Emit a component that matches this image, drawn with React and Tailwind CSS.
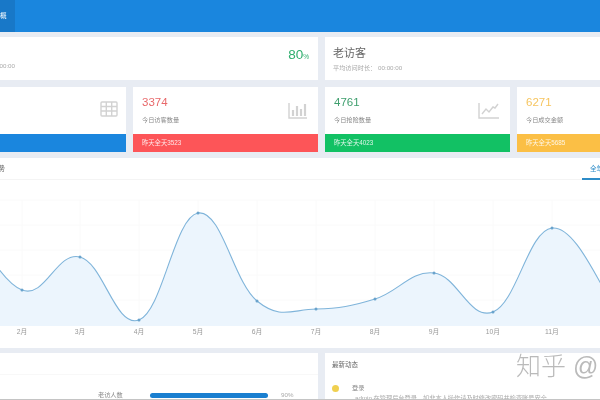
const font = { fontFamily: '"Liberation Sans", "Noto Sans CJK SC", sans-serif' };

const points = [
  [-37, 212], [22, 290], [80, 257], [139, 320], [198, 213], [257, 301],
  [316, 309], [375, 299], [434, 273], [493, 312], [552, 228], [611, 300],
];
const months = ['2月', '3月', '4月', '5月', '6月', '7月', '8月', '9月', '10月', '11月'];

// catmull-rom through the data points, chart top is y=181 on the page
function smoothPath(pts) {
  let d = `M${pts[0][0]} ${pts[0][1]}`;
  for (let i = 0; i < pts.length - 1; i++) {
    const p0 = pts[i - 1] || pts[i];
    const p1 = pts[i];
    const p2 = pts[i + 1];
    const p3 = pts[i + 2] || p2;
    const c1x = p1[0] + (p2[0] - p0[0]) / 5;
    const c1y = p1[1] + (p2[1] - p0[1]) / 5;
    const c2x = p2[0] - (p3[0] - p1[0]) / 5;
    const c2y = p2[1] - (p3[1] - p1[1]) / 5;
    d += ` C${c1x} ${c1y} ${c2x} ${c2y} ${p2[0]} ${p2[1]}`;
  }
  return d;
}

function TableIcon() {
  return (
    <svg width="18" height="16" viewBox="0 0 18 16" fill="none" stroke="#d2d2d2" strokeWidth="1.4">
      <rect x="1" y="1" width="16" height="14" rx="1" />
      <path d="M1 5.5h16M1 10h16M6.3 1v14M11.7 1v14" />
    </svg>
  );
}

function BarsIcon() {
  return (
    <svg width="20" height="17" viewBox="0 0 20 17" fill="none" stroke="#d2d2d2" strokeWidth="1.4">
      <path d="M1 1v15h18" />
      <path d="M5 14V8M9 14V4M13 14V7M17 14V2" strokeWidth="2.2" />
    </svg>
  );
}

function LineIcon() {
  return (
    <svg width="22" height="17" viewBox="0 0 22 17" fill="none" stroke="#d2d2d2" strokeWidth="1.4">
      <path d="M1 1v15h20" />
      <path d="M4 12l4-5 3 3 4-5 2 1 3-4" />
    </svg>
  );
}

function StatCard({ value, label, sub, valueClass, barClass, icon }) {
  return (
    <div className="flex flex-col bg-white overflow-hidden">
      <div className="flex flex-1 items-center justify-between pl-[9px] pr-[10px]">
        <div className="-mt-[1px]">
          <div className={`text-[11.5px] leading-[14px] ${valueClass}`}>{value}</div>
          <div className="mt-[6px] text-[6.2px] leading-[10px] text-[#888] whitespace-nowrap">{label}</div>
        </div>
        {icon}
      </div>
      <div className={`h-[18px] pl-[9px] text-[6.3px] leading-[18px] text-white/85 whitespace-nowrap ${barClass}`}>{sub}</div>
    </div>
  );
}

export default function App() {
  const line = smoothPath(points);
  return (
    <div className="relative w-[600px] h-[400px] overflow-hidden bg-[#e8ecf3] blur-[0.5px]" style={font}>
      <div className="h-[32px] bg-[#1a86de]">
        <div className="flex h-full w-[15px] items-center overflow-hidden bg-[#1878c8] text-[6.5px] text-white">
          <span className="whitespace-nowrap">概</span>
        </div>
      </div>

      <div className="mt-[5px] grid grid-cols-[318px_275px] gap-x-[7px]">
        <div className="flex h-[43px] items-center justify-between bg-white pr-[9px]">
          <div className="flex w-[15px] justify-end self-end overflow-hidden pb-[10px] text-[6.2px] leading-[8px] text-[#aaa] whitespace-nowrap">00:00:00</div>
          <div className="text-[13.5px] text-[#2fae6e] -mt-[7px]">80<span className="text-[6.5px]">%</span></div>
        </div>
        <div className="flex h-[43px] flex-col justify-center bg-white pl-[8px]">
          <div className="text-[11px] leading-[16px] text-[#666]">老访客</div>
          <div className="mt-[2px] text-[6.2px] leading-[10px] text-[#aaa]">平均访问时长： 00:00:00</div>
        </div>
      </div>

      <div className="mt-[7px] grid h-[65px] grid-cols-[126px_185px_185px_100px] gap-x-[7px]">
        <div className="flex flex-col bg-white">
          <div className="flex flex-1 items-center justify-end pr-[8px] pb-[3px]"><TableIcon /></div>
          <div className="h-[18px] bg-[#1a86de]" />
        </div>
        <StatCard value="3374" label="今日访客数量" sub="昨天全天3523" valueClass="text-[#e8686a]" barClass="bg-[#fd5558]" icon={<BarsIcon />} />
        <StatCard value="4761" label="今日抢险数量" sub="昨天全天4023" valueClass="text-[#3f9f6e]" barClass="bg-[#12c164]" icon={<LineIcon />} />
        <StatCard value="6271" label="今日成交金额" sub="昨天全天5685" valueClass="text-[#f6c560]" barClass="bg-[#fbbf45]" />
      </div>

      <div className="mt-[6px] h-[190px] bg-white">
        <div className="flex h-[22px] items-start justify-between border-b border-[#f4f4f4]">
          <div className="w-[5px] overflow-hidden pt-[7px] text-[6.5px] leading-[8px] text-[#666]">
            <div className="flex w-[5px] justify-end whitespace-nowrap">趋势</div>
          </div>
          <div className="h-[22px] w-[18px] border-b-2 border-[#2d8cc8] pl-[8px] pt-[7px] text-[6.5px] leading-[8px] text-[#2d8cc8] whitespace-nowrap">全年</div>
        </div>
        <svg width="600" height="168" viewBox="0 180 600 168">
          {[200, 225, 250, 275, 300].map((y) => (
            <path key={y} d={`M0 ${y}H600`} stroke="#fafafa" />
          ))}
          {points.slice(1, 11).map(([x]) => (
            <path key={x} d={`M${x} 200V326`} stroke="#fafafa" />
          ))}
          <path d={`${line} V326 H-37 Z`} fill="#ecf5fd" />
          <path d={line} fill="none" stroke="#7fb4da" strokeWidth="1.1" />
          {points.slice(1, 11).map(([x, y]) => (
            <circle key={x} cx={x} cy={y} r="1.5" fill="#6aa3cc" />
          ))}
          {points.slice(1, 11).map(([x], i) => (
            <text key={x} x={x} y="333.5" textAnchor="middle" fontSize="6.8" fill="#999">{months[i]}</text>
          ))}
        </svg>
      </div>

      <div className="mt-[5px] grid grid-cols-[318px_275px] gap-x-[7px]">
        <div className="h-[47px] bg-white">
          <div className="h-[22px] border-b border-[#f8f8f8]" />
          <div className="flex items-center pt-[16px]">
            <span className="ml-[98px] w-[52px] text-[6.2px] leading-[8px] text-[#888] whitespace-nowrap">老访人数</span>
            <div className="h-[5px] w-[118px] rounded-full bg-[#1a7fd0]" />
            <span className="ml-[13px] text-[6.2px] leading-[8px] text-[#aaa]">90%</span>
          </div>
        </div>
        <div className="h-[47px] bg-white pl-[7px]">
          <div className="pt-[8px] text-[6.5px] leading-[8px] text-[#666]">最新动态</div>
          <div className="mt-[15px] flex items-center">
            <span className="h-[7px] w-[7px] rounded-full bg-[#f0d050]" />
            <span className="ml-[13px] text-[6.2px] leading-[8px] text-[#888]">登录</span>
          </div>
          <div className="ml-[23px] mt-[2px] text-[6.2px] leading-[8px] text-[#aaa] whitespace-nowrap">admin 在管理后台登录，如非本人操作请及时修改密码并检查账号安全</div>
        </div>
      </div>

      <div className="absolute left-[516px] top-[350px] text-[25px] leading-[32px] font-light text-[#a9a9a9]/80 whitespace-nowrap">知乎 @</div>
      <div className="absolute inset-x-0 bottom-0 h-px bg-[#c4c4c4]" />
    </div>
  );
}
